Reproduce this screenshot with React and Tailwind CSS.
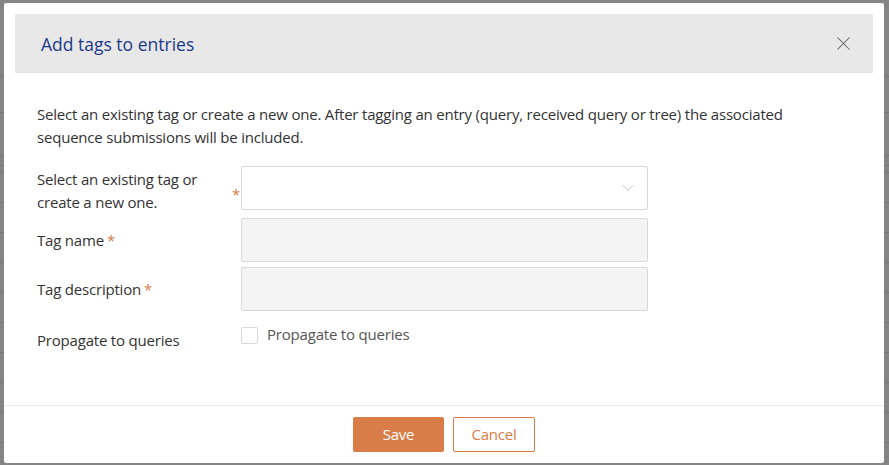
import { X, ChevronDown } from 'lucide-react'

const font = { fontFamily: '"Segoe UI", "Open Sans", "Noto Sans", sans-serif' }

function BgRows() {
  const ys = [76, 112, 155, 165, 172, 202, 232, 262, 292, 322, 352, 382, 412, 442]
  return (
    <div className="absolute inset-0">
      {ys.map((y) => (
        <div key={y} className="absolute left-0 right-0 h-px bg-[#777]" style={{ top: y }} />
      ))}
    </div>
  )
}

function Req() {
  return <span className="text-[#d97c47] ml-[3px]">*</span>
}

export default function App() {
  return (
    <div className="relative h-[465px] w-[889px] overflow-hidden bg-[#858585] text-[15px] text-[#333] tracking-[-0.2px]" style={font}>
      <BgRows />
      <div className="absolute left-[4px] top-[3px] w-[880px] h-[460px] bg-white rounded-[2px] flex flex-col">
        <div className="mx-[11px] mt-[11px] h-[59px] bg-[#e8e8e8] flex items-center justify-between pl-[26px] pr-[18px]">
          <h2 className="text-[17.5px] text-[#1d3a8a] font-normal tracking-normal pt-[1px]">Add tags to entries</h2>
          <X size={23} strokeWidth={1.1} className="text-[#666]" />
        </div>

        <div className="flex-1 px-[33px] pt-[30px]">
          <p className="leading-[23px]">
            Select an existing tag or create a new one. After tagging an entry (query, received query or tree) the associated sequence submissions will be included.
          </p>

          <div className="mt-[17px] flex flex-col">
            <div className="flex items-start">
              <div className="w-[204px] flex items-center justify-between leading-[23px] pt-[2px]">
                <span>Select an existing tag or<br />create a new one.</span>
                <span className="text-[#d97c47] mr-[1px] mt-[6px]">*</span>
              </div>
              <div className="w-[407px] h-[44px] border border-[#d9d9d9] rounded-[2px] bg-white flex items-center justify-end pr-[9px]">
                <ChevronDown size={20} strokeWidth={0.9} className="text-[#aaa]" />
              </div>
            </div>

            <div className="flex items-center mt-[4px]">
              <div className="w-[204px]">Tag name<Req /></div>
              <div className="w-[407px] h-[44px] border border-[#d9d9d9] rounded-[2px] bg-[#f4f4f4]" />
            </div>

            <div className="flex items-center mt-[5px]">
              <div className="w-[204px]">Tag description<Req /></div>
              <div className="w-[407px] h-[44px] border border-[#d9d9d9] rounded-[2px] bg-[#f4f4f4]" />
            </div>

            <div className="flex items-start mt-[14px]">
              <div className="w-[204px] pt-[4px] leading-[23px]">Propagate to queries</div>
              <label className="flex items-center gap-[9px] text-[#555]">
                <span className="w-[17px] h-[17px] border border-[#d9d9d9] rounded-[2px] bg-white" />
                <span className="-mt-[2px]">Propagate to queries</span>
              </label>
            </div>
          </div>
        </div>

        <div className="border-t border-[#ececec] h-[58px] flex items-start justify-center gap-[9px] pt-[11px]">
          <button className="w-[91px] h-[35px] rounded-[2px] bg-[#d97c47] text-white text-[15px]">Save</button>
          <button className="w-[82px] h-[35px] rounded-[2px] border border-[#d97c47] bg-white text-[#d97c47] text-[15px]">Cancel</button>
        </div>
      </div>
    </div>
  )
}
